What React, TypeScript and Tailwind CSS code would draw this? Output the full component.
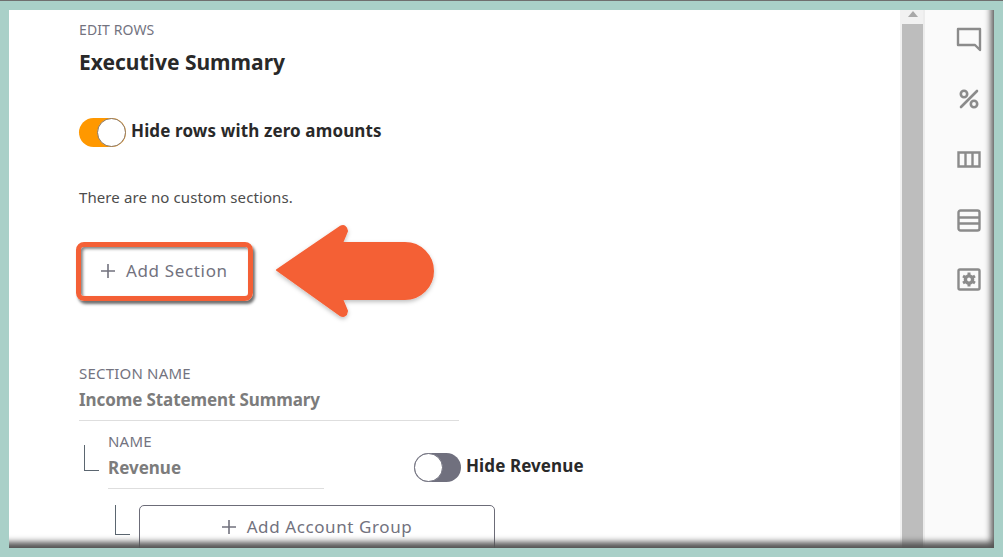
const font = { fontFamily: '"Noto Sans", "Liberation Sans", sans-serif' };

function Toggle({ on }: { on: boolean }) {
  return (
    <div className={`flex h-[29px] w-[47px] shrink-0 rounded-full ${on ? "justify-end bg-[#ff9800]" : "justify-start bg-[#70707e]"}`}>
      <div className={`h-[29px] w-[29px] rounded-full border bg-white ${on ? "border-[#8a7560]" : "border-[#70707e]"}`} />
    </div>
  );
}

function Plus() {
  return (
    <svg width="14" height="14" viewBox="0 0 14 14" className="shrink-0">
      <path d="M7 0v14M0 7h14" stroke="#72727e" strokeWidth="1.6" />
    </svg>
  );
}

function Arrow() {
  return (
    <svg width="170" height="106" viewBox="0 0 170 106" className="absolute left-[263px] top-[208px]">
      <defs>
        <filter id="s" x="-10%" y="-10%" width="120%" height="125%">
          <feDropShadow dx="0" dy="2" stdDeviation="2" floodColor="#000" floodOpacity="0.25" />
        </filter>
      </defs>
      <path
        d="M5 52 L68 9 Q74 6 75 13 L70 25 L133 25 A28 28 0 0 1 133 81 L70 81 L75 93 Q74 100 68 97 Z"
        fill="#f46036"
        stroke="#f46036"
        strokeWidth="2"
        strokeLinejoin="round"
        filter="url(#s)"
      />
    </svg>
  );
}

function Rail() {
  const c = "#8b8b8b";
  return (
    <div className="flex w-[69px] shrink-0 flex-col items-end bg-[#fafafa] pr-[12px] pt-[17px]">
      <svg width="26" height="25" viewBox="0 0 26 25" fill="none" stroke={c} strokeWidth="2.4">
        <path d="M2 2h22v21l-5-5H2z" strokeLinejoin="round" />
      </svg>
      <svg width="22" height="22" viewBox="0 0 22 22" fill="none" stroke={c} strokeWidth="2.6" className="mr-[2px] mt-[36px]">
        <path d="M19 3 3 19" strokeLinecap="round" />
        <circle cx="6" cy="6" r="3.2" />
        <circle cx="16" cy="16" r="3.2" />
      </svg>
      <svg width="24" height="17" viewBox="0 0 24 17" fill="none" stroke={c} strokeWidth="2.4" className="mr-[1px] mt-[41px]">
        <path d="M1.5 1.5h21v14h-21zM8.5 1.5v14M15.5 1.5v14" />
      </svg>
      <svg width="24" height="23" viewBox="0 0 24 23" fill="none" stroke={c} strokeWidth="2.4" className="mr-[1px] mt-[41px]">
        <rect x="1.5" y="1.5" width="21" height="20" rx="2" />
        <path d="M1.5 8.5h21M1.5 14.5h21" />
      </svg>
      <svg width="24" height="23" viewBox="0 0 24 23" fill="none" stroke={c} strokeWidth="2.4" className="mr-[1px] mt-[36px]">
        <rect x="1.5" y="1.5" width="21" height="20" rx="1.5" />
        <circle cx="12" cy="11.5" r="3.6" strokeWidth="3.4" />
        <path d="M12 4.6v3M12 15.4v3M6 8l2.6 1.5M15.4 13.5l2.6 1.5M6 15l2.6-1.5M15.4 9.5 18 8" strokeWidth="3" />
      </svg>
    </div>
  );
}

export default function App() {
  return (
    <div className="h-[557px] w-[1003px] overflow-hidden border-t border-[#6f6f6f] bg-[#a9d0c8] pb-[9px] pl-[9px] pr-[9px] pt-[9px]" style={font}>
      <div className="relative flex h-[538px] w-[985px] overflow-hidden bg-white">
        <main className="relative w-[891px] shrink-0 overflow-hidden pl-[70px] pt-[10px]">
          <p className="text-[14px] leading-[20px] tracking-[0.1px] text-[#73737f]">EDIT ROWS</p>
          <h1 className="mt-[9px] text-[21px] font-bold leading-[26px] text-[#292929]">Executive Summary</h1>

          <div className="mt-[43px] flex gap-[5px]">
            <Toggle on />
            <span className="pt-[1px] text-[17px] font-bold leading-[24px] tracking-[0.13px] text-[#292929]">Hide rows with zero amounts</span>
          </div>

          <p className="mt-[39px] text-[15px] leading-[22px] tracking-[0.1px] text-[#4c4c4c]">There are no custom sections.</p>

          <button className="-ml-[3px] mt-[34px] flex h-[59px] w-[177px] items-center gap-[11px] rounded-[8px] border-[5px] border-[#f46036] pb-[1px] pl-[20px] shadow-[2px_3px_3px_#6e6e6e,inset_2px_2px_3px_#888]">
            <Plus />
            <span className="text-[17px] leading-[24px] tracking-[0.65px] text-[#72727e]">Add Section</span>
          </button>

          <p className="mt-[62px] text-[15px] leading-[20px] tracking-[0.2px] text-[#73737f]">SECTION NAME</p>
          <div className="w-[380px] border-b border-[#dedede] pb-[8px] pt-[5px]">
            <p className="text-[17px] font-bold leading-[24px] tracking-[-0.1px] text-[#7c7c7c]">Income Statement Summary</p>
          </div>

          <div className="flex">
            <div className="ml-[5px] mt-[24px] h-[26px] w-[15px] shrink-0 border-b border-l border-[#5b6670]" />
            <div className="ml-[9px] w-[216px] shrink-0 border-b border-[#dedede] pb-[8px] pt-[10px]">
              <p className="text-[15px] leading-[20px] tracking-[0.2px] text-[#73737f]">NAME</p>
              <p className="mt-[5px] text-[17px] font-bold leading-[24px] text-[#7c7c7c]">Revenue</p>
            </div>
            <div className="ml-[90px] mt-[32px] flex h-[29px] gap-[5px]">
              <Toggle on={false} />
              <span className="pt-[1px] text-[17px] font-bold leading-[24px] tracking-[0.1px] text-[#292929]">Hide Revenue</span>
            </div>
          </div>

          <div className="mt-[16px] flex">
            <div className="ml-[36px] h-[30px] w-[15px] shrink-0 border-b border-l border-[#5b6670]" />
            <button className="ml-[9px] flex h-[60px] w-[356px] shrink-0 justify-center gap-[11px] rounded-[5px] border border-[#6c6c78] pt-[9px]">
              <span className="mt-[5px]"><Plus /></span>
              <span className="text-[17px] leading-[24px] tracking-[0.6px] text-[#72727e]">Add Account Group</span>
            </button>
          </div>

          <Arrow />
        </main>

        <div className="flex w-[25px] shrink-0 flex-col border-r-2 border-[#ececec] bg-[#f1f1f1] pl-[2px]">
          <div className="flex h-[14px] items-start justify-center pt-[1px]">
            <div className="h-0 w-0 border-x-[5px] border-b-[6px] border-x-transparent border-b-[#a8a8a8]" />
          </div>
          <div className="flex-1 bg-[#bdbdbd]" />
        </div>

        <Rail />

        <div className="pointer-events-none absolute inset-0 shadow-[inset_-6px_-9px_6px_-3px_#555]" />
      </div>
    </div>
  );
}
